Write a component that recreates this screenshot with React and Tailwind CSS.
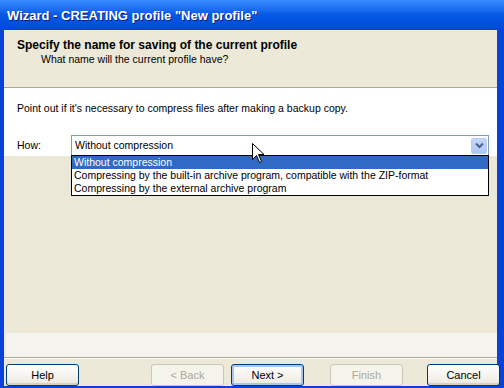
import React from 'react';

const font = { fontFamily: '"Liberation Sans", Arial, sans-serif' };

function XpButton({ label, disabled, focused }) {
    const base = 'w-[73px] h-[22px] shrink-0 rounded-[3px] border text-[11px] flex items-center justify-center';
    if (disabled) {
        return (
            <div className={`${base} border-[#c9c7ba] bg-[#f5f4ea] text-[#aca899]`}>{label}</div>
        );
    }
    return (
        <div className={`${base} border-[#003c74] bg-gradient-to-b from-white to-[#ece9de] text-black ${focused ? 'shadow-[inset_0_0_0_2px_#a8c4f5]' : 'shadow-[inset_0_-2px_0_#d6d0c5]'}`}>
            {label}
        </div>
    );
}

export default function App() {
    return (
        <div style={font} className="relative w-[504px] h-[388px] bg-[#0842d8] flex flex-col overflow-hidden">
            {/* Title bar */}
            <div className="h-[30px] bg-gradient-to-b from-[#3b8cff] via-[#0559e6] to-[#0348d8] flex items-center pl-[7px] pt-[1px] shrink-0">
                <span className="text-white font-bold text-[13px] [text-shadow:1px_1px_0_#0a1e7a]">
                    Wizard - CREATING profile "New profile"
                </span>
            </div>

            {/* Window body */}
            <div className="flex-1 pl-[4px] pr-[7px] pb-[2px] flex flex-col min-h-0">
                <div className="flex-1 bg-[#ece9d8] flex flex-col min-h-0">
                    {/* Header */}
                    <div className="h-[58px] shrink-0 border-b border-[#aca899] pl-[13px] pt-[8px] flex flex-col">
                        <span className="font-bold text-[12px] leading-[14px] text-black">
                            Specify the name for saving of the current profile
                        </span>
                        <span className="text-[10.5px] leading-[13px] text-black pl-[24px] mt-[1px]">
                            What name will the current profile have?
                        </span>
                    </div>

                    {/* Content */}
                    <div className="h-[68px] shrink-0 bg-white border-t border-white pl-[13px] pr-[8px] flex flex-col">
                        <span className="text-[10.5px] leading-[13px] text-black mt-[13px]">
                            Point out if it's necessary to compress files after making a backup copy.
                        </span>
                        <div className="flex items-center mt-[20px]">
                            <span className="text-[10.5px] w-[54px] text-black">How:</span>
                            <div className="flex-1 h-[21px] border border-[#7f9db9] bg-white flex items-center pl-[3px] pr-[1px]">
                                <span className="flex-1 text-[10.5px] text-black">Without compression</span>
                                <div className="w-[16px] h-[16px] rounded-[2px] bg-gradient-to-b from-[#c6d6fb] to-[#b0c6f7] border border-[#b9cbf5] flex items-center justify-center">
                                    <svg width="9" height="7" viewBox="0 0 9 7">
                                        <path d="M1 1.5 L4.5 5 L8 1.5" fill="none" stroke="#4d6185" strokeWidth="2" />
                                    </svg>
                                </div>
                            </div>
                        </div>
                    </div>

                    {/* Lower panel */}
                    <div className="flex-1 ml-[2px] flex flex-col min-h-0">
                        <div className="flex-1 bg-[#ebe8d8]" />
                        <div className="h-[24px] bg-[#f4f3ee]" />
                    </div>

                    {/* Separator */}
                    <div className="h-[2px] shrink-0 border-t border-[#aca899] border-b border-b-white" />

                    {/* Buttons */}
                    <div className="h-[27px] shrink-0 flex items-start pt-[5px] pl-[2px]">
                        <XpButton label="Help" />
                        <div className="ml-[72px] shrink-0">
                            <XpButton label="< Back" disabled />
                        </div>
                        <div className="ml-[7px] shrink-0">
                            <XpButton label="Next >" focused />
                        </div>
                        <div className="ml-[26px] shrink-0">
                            <XpButton label="Finish" disabled />
                        </div>
                        <div className="ml-[24px] shrink-0">
                            <XpButton label="Cancel" />
                        </div>
                    </div>
                </div>
            </div>

            {/* Open dropdown list */}
            <div className="absolute left-[71px] top-[155px] w-[418px] border border-black bg-white flex flex-col">
                <span className="h-[13px] leading-[13px] text-[10.5px] bg-[#316ac5] text-white pl-[2px]">Without compression</span>
                <span className="h-[13px] leading-[13px] text-[10.5px] text-black pl-[2px]">Compressing by the built-in archive program, compatible with the ZIP-format</span>
                <span className="h-[13px] leading-[13px] text-[10.5px] text-black pl-[2px]">Compressing by the external archive program</span>
            </div>

            {/* Mouse cursor */}
            <svg className="absolute left-[252px] top-[143px]" width="13" height="21" viewBox="0 0 13 21">
                <path d="M0.5 0.5 L0.5 16.5 L4.5 12.5 L7.5 19.5 L9.5 18.5 L6.5 11.5 L12 11.5 Z" fill="white" stroke="black" strokeWidth="1" strokeLinejoin="miter" />
            </svg>
        </div>
    );
}
